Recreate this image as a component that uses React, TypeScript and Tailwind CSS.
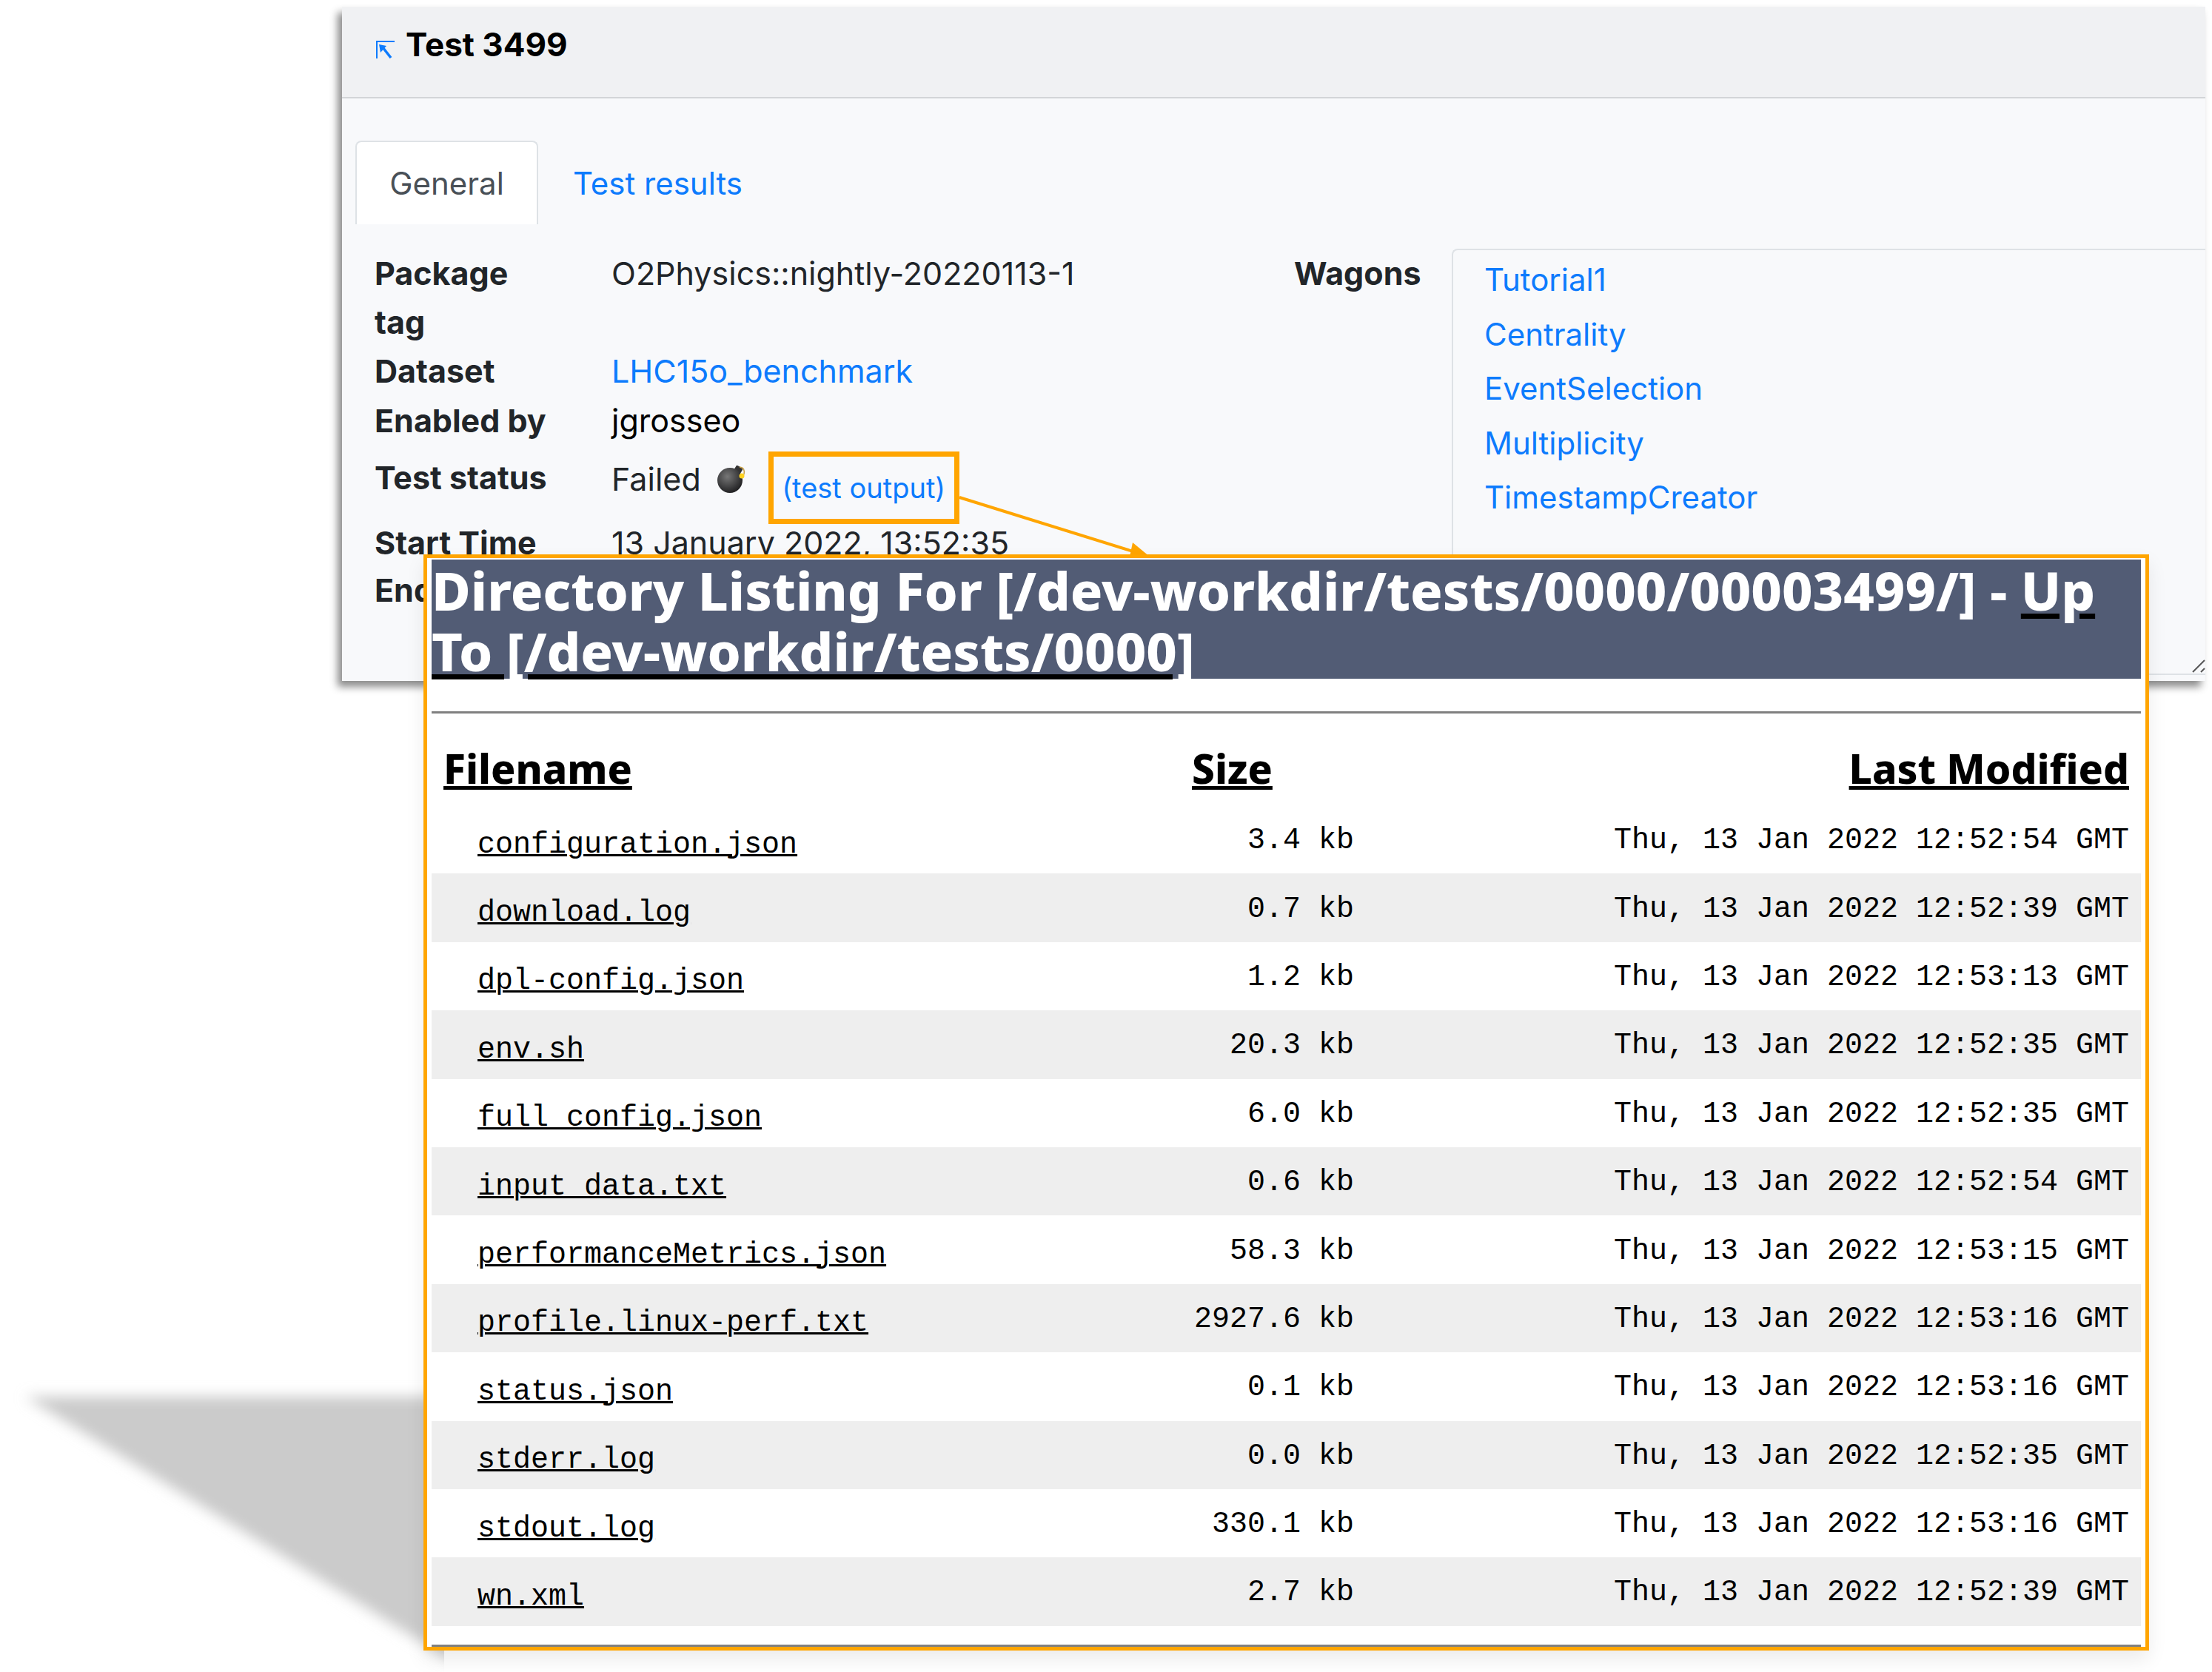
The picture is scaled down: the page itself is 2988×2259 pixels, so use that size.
const files = [
  ['configuration.json', '3.4 kb', 'Thu, 13 Jan 2022 12:52:54 GMT'],
  ['download.log', '0.7 kb', 'Thu, 13 Jan 2022 12:52:39 GMT'],
  ['dpl-config.json', '1.2 kb', 'Thu, 13 Jan 2022 12:53:13 GMT'],
  ['env.sh', '20.3 kb', 'Thu, 13 Jan 2022 12:52:35 GMT'],
  ['full_config.json', '6.0 kb', 'Thu, 13 Jan 2022 12:52:35 GMT'],
  ['input_data.txt', '0.6 kb', 'Thu, 13 Jan 2022 12:52:54 GMT'],
  ['performanceMetrics.json', '58.3 kb', 'Thu, 13 Jan 2022 12:53:15 GMT'],
  ['profile.linux-perf.txt', '2927.6 kb', 'Thu, 13 Jan 2022 12:53:16 GMT'],
  ['status.json', '0.1 kb', 'Thu, 13 Jan 2022 12:53:16 GMT'],
  ['stderr.log', '0.0 kb', 'Thu, 13 Jan 2022 12:52:35 GMT'],
  ['stdout.log', '330.1 kb', 'Thu, 13 Jan 2022 12:53:16 GMT'],
  ['wn.xml', '2.7 kb', 'Thu, 13 Jan 2022 12:52:39 GMT'],
];

const wagons = ['Tutorial1', 'Centrality', 'EventSelection', 'Multiplicity', 'TimestampCreator'];

function Bomb() {
  return (
    <svg width="40" height="40" viewBox="0 0 40 40" className="ml-[22px]">
      <defs>
        <radialGradient id="bombBody" cx="0.4" cy="0.35" r="0.7">
          <stop offset="0" stopColor="#777" />
          <stop offset="1" stopColor="#1c1c1e" />
        </radialGradient>
      </defs>
      <rect x="23" y="3" width="10" height="10" rx="2" fill="#333" transform="rotate(30 28 8)" />
      <circle cx="17" cy="22" r="17" fill="url(#bombBody)" />
      <path d="M30 4 Q38 5 36 14" fill="none" stroke="#c9a24a" strokeWidth="1.5" />
      <circle cx="33" cy="16" r="3.5" fill="#ffd21f" />
    </svg>
  );
}

function BackWindow() {
  const label = 'font-bold text-[#212529]';
  return (
    <div className="absolute left-[462px] top-[9px] w-[2517px] h-[911px] bg-[#f8f9fb] shadow-[-6px_8px_10px_rgba(0,0,0,0.45)] font-['Inter',sans-serif] text-[43px] leading-[66px] text-[#212529]">
      <div className="h-[124px] bg-[#f0f1f3] border-b-[2px] border-[#d3d5d8] flex pl-[46px] pt-[18px] items-start">
        <svg width="26" height="24" viewBox="0 0 26 24" className="mt-[28px] mr-[14px]" fill="none" stroke="#0d7bfd">
          <path d="M1 24V1H25" strokeWidth="2" />
          <path d="M20 23L9 9" strokeWidth="3.5" />
          <path d="M4 5L14 7L6 16z" fill="#0d7bfd" stroke="none" />
        </svg>
        <span className="font-bold text-[44px] leading-[66px] text-black">Test 3499</span>
      </div>
      <div className="flex items-stretch pl-[18px] mt-[57px] h-[113px]">
        <div className="w-[247px] bg-white border-x-2 border-t-2 border-[#dee2e6] rounded-t-lg text-[#495057] text-[42px] flex justify-center pt-[23px]">General</div>
        <div className="ml-[47px] text-[#0d7bfd] text-[42px] pt-[25px]">Test results</div>
      </div>
      <div className="flex items-start pl-[44px] pt-[33px]">
        <div className="w-[1242px] shrink-0">
          <div className="flex h-[132px]">
            <div className={`w-[320px] ${label}`}>Package<br />tag</div>
            <div>O2Physics::nightly-20220113-1</div>
          </div>
          <div className="flex h-[67px]">
            <div className={`w-[320px] ${label}`}>Dataset</div>
            <div className="text-[#0d7bfd]">LHC15o_benchmark</div>
          </div>
          <div className="flex h-[72px]">
            <div className={`w-[320px] ${label}`}>Enabled by</div>
            <div className="text-black">jgrosseo</div>
          </div>
          <div className="flex h-[90px] items-center">
            <div className={`w-[320px] ${label} -mt-[14px]`}>Test status</div>
            <div className="flex items-center -mt-[10px]">
              Failed
              <Bomb />
              <div className="relative top-[12px] ml-[29px] w-[258px] h-[98px] border-[7px] border-[#ffa500] flex items-center justify-center text-[#0d7bfd] text-[38px]">(test output)</div>
            </div>
          </div>
          <div className="flex h-[67px] pt-[3px]">
            <div className={`w-[320px] ${label}`}>Start Time</div>
            <div>13 January 2022, 13:52:35</div>
          </div>
          <div className="flex h-[67px]">
            <div className={`w-[320px] ${label}`}>End Time</div>
          </div>
        </div>
        <div className={`w-[213px] shrink-0 ${label}`}>Wagons</div>
        <div className="relative flex-1 h-[576px] border-2 border-r-0 border-[#dee2e6] rounded-tl-lg pl-[42px] pt-[3px] flex flex-col text-[#0d7bfd] text-[42px]">
          {wagons.map((w) => (
            <div key={w} className="h-[73.6px] leading-[73.6px]">{w}</div>
          ))}
          <svg width="18" height="18" viewBox="0 0 18 18" className="absolute right-0 bottom-[1px]" stroke="#555" strokeWidth="2">
            <path d="M1 17L17 1" />
            <path d="M12 17L17 12" />
          </svg>
        </div>
      </div>
    </div>
  );
}

function Listing() {
  return (
    <div className="absolute left-[572px] top-[749px] w-[2331px] h-[1481px] bg-white border-[5px] border-[#ffa500] shadow-[0_12px_24px_rgba(0,0,0,0.08)] px-[6px] pt-[2px] flex flex-col">
      <h1 className="bg-[#525c75] text-white font-extrabold font-['Noto_Sans',sans-serif] text-[72px] leading-[82px] h-[161px] shrink-0">
        Directory Listing For [/dev-workdir/tests/0000/00003499/] - <span className="underline decoration-black">Up To [/dev-workdir/tests/0000]</span>
      </h1>
      <div className="h-[3px] bg-[#808080] mt-[44px] shrink-0" />
      <div className="flex items-center h-[124px] pt-[24px] shrink-0 text-black font-extrabold font-['Noto_Sans',sans-serif] text-[55px] underline px-[16px]">
        <div className="w-[1011px]">Filename</div>
        <div className="w-[219px]">Size</div>
        <div className="flex-1 text-right">Last Modified</div>
      </div>
      {files.map((f) => (
        <div key={f[0]} className="flex items-center h-[92.4px] pt-[4px] shrink-0 px-[16px] odd:bg-[#eeeeee] font-['Liberation_Mono',monospace] text-[40px] text-black">
          <div className="w-[1011px] pl-[46px] pt-[11px] underline decoration-[3px]">{f[0]}</div>
          <div className="w-[219px] text-right">{f[1]}</div>
          <div className="flex-1 text-right">{f[2]}</div>
        </div>
      ))}
      <div className="h-[3px] bg-[#808080] mt-auto shrink-0" />
    </div>
  );
}

export default function App() {
  return (
    <div className="relative w-[2988px] h-[2259px] bg-white overflow-hidden">
      <svg width="600" height="399" viewBox="0 0 600 399" className="absolute left-0 top-[1860px]">
        <defs>
          <filter id="blur" x="-10%" y="-10%" width="120%" height="120%">
            <feGaussianBlur stdDeviation="9" />
          </filter>
        </defs>
        <polygon points="34,27 620,27 620,390" fill="#cbcbcb" filter="url(#blur)" />
      </svg>
      <BackWindow />
      <svg width="300" height="120" viewBox="0 0 300 120" className="absolute left-[1290px] top-[660px]">
        <line x1="6" y1="12" x2="250" y2="88" stroke="#ffa500" strokeWidth="4" />
        <polygon points="240,73 263,92 235,97" fill="#ffa500" />
      </svg>
      <Listing />
    </div>
  );
}
